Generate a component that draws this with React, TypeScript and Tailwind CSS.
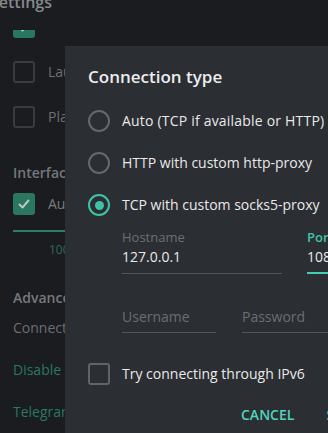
import React from "react";

function CheckMark() {
  return (
    <svg width="14" height="14" viewBox="0 0 14 14" fill="none">
      <polyline points="2.5,7.5 5.5,10.5 11.5,3.5" stroke="#b7c6c1" strokeWidth="2" strokeLinecap="round" strokeLinejoin="round" />
    </svg>
  );
}

function BgCheck({ checked, label, textClass = "" }: { checked?: boolean; label: string; textClass?: string }) {
  return (
    <div className="flex h-[45px] items-center gap-[13px] pl-[13px]">
      {checked ? (
        <div className="flex h-[22px] w-[22px] shrink-0 items-center justify-center rounded-[3px] bg-[#2b765f]">
          <CheckMark />
        </div>
      ) : (
        <div className="h-[22px] w-[22px] shrink-0 rounded-[3px] border-2 border-[#393b3f]" />
      )}
      <span className={"whitespace-nowrap text-[14px] leading-[20px] text-[#6d7074] " + textClass}>{label}</span>
    </div>
  );
}

function Radio({ selected, label, textClass = "" }: { selected?: boolean; label: string; textClass?: string }) {
  return (
    <div className="flex h-[42px] items-center gap-[12px]">
      {selected ? (
        <div className="flex h-[22px] w-[22px] shrink-0 items-center justify-center rounded-full border-2 border-[#3fc3a8]">
          <div className="h-[9px] w-[9px] rounded-full bg-[#3fc3a8]" />
        </div>
      ) : (
        <div className="h-[22px] w-[22px] shrink-0 rounded-full border-2 border-[#65686c]" />
      )}
      <span className={"whitespace-nowrap text-[14px] leading-[20px] text-[#e9e9ea] " + textClass}>{label}</span>
    </div>
  );
}

export default function App() {
  return (
    <div className="relative h-[433px] w-[328px] overflow-hidden bg-[#1a1c1f] font-['Open_Sans',sans-serif]">
      {/* Settings page (behind dialog) */}
      <div className="flex flex-col">
        <div className="relative z-10 h-[30px] overflow-hidden bg-[#1a1c1f]">
          <div className="-ml-[10px] -mt-[9px] whitespace-nowrap text-[16px] font-semibold leading-[22px] text-[#86898e]">
            Settings
          </div>
        </div>
        <div className="h-[403px] overflow-hidden">
          <div className="-mt-[26px] flex flex-col">
            <BgCheck checked label="Show taskbar icon" textClass="mb-[3px]" />
            <BgCheck label="Launch Telegram when system starts" />
            <BgCheck label="Place Telegram in “Send to” menu" />
            <div className="mt-[24px] h-[20px] pl-[13px] text-[14px] font-semibold leading-[20px] text-[#74777b]">
              Interface Scale
            </div>
            <div className="flex h-[42px] items-center gap-[13px] pl-[13px]">
              <div className="flex h-[22px] w-[22px] shrink-0 items-center justify-center rounded-[3px] bg-[#2b765f]">
                <CheckMark />
              </div>
              <span className="whitespace-nowrap text-[14px] leading-[20px] text-[#797c80]">Auto (100%)</span>
            </div>
            <div className="ml-[13px] mt-[5px] h-[2px] w-[200px] bg-[#2a7d66]" />
            <div className="ml-[49px] mt-[10px] h-[16px] text-[12px] leading-[16px] text-[#2a6b5d]">100%</div>
            <div className="mt-[30px] h-[20px] pl-[13px] text-[14px] font-semibold leading-[20px] text-[#76797d]">
              Advanced Settings
            </div>
            <div className="mt-[10px] h-[20px] pl-[13px] text-[14px] leading-[20px] text-[#6c6f73]">
              Connection type: TCP with proxy
            </div>
            <div className="mt-[22px] h-[20px] pl-[13px] text-[14px] leading-[20px] text-[#2a7860]">
              Disable local passcode
            </div>
            <div className="mt-[22px] h-[20px] pl-[13px] text-[14px] leading-[20px] text-[#2a7860]">
              Telegram FAQ
            </div>
          </div>
        </div>
      </div>

      {/* Dialog */}
      <div className="absolute left-[65px] top-[46px] h-[400px] w-[300px] bg-[#2b2e32] pl-[23px] pt-[19px]">
        <div className="whitespace-nowrap text-[17px] font-semibold leading-[23px] text-[#ececed]">Connection type</div>
        <div className="mt-[12px] flex flex-col">
          <Radio label="Auto (TCP if available or HTTP)" textClass="tracking-[0.2px]" />
          <Radio label="HTTP with custom http-proxy" />
          <Radio selected label="TCP with custom socks5-proxy" />
        </div>
        <div className="mt-[3px] flex items-end gap-[25px] pl-[34px]">
          <div className="flex w-[160px] shrink-0 flex-col">
            <div className="h-[16px] text-[13px] leading-[16px] text-[#6c7075]">Hostname</div>
            <div className="mt-[2px] h-[20px] text-[14px] leading-[20px] text-[#e9e9ea]">127.0.0.1</div>
            <div className="mt-[6px] h-[1px] bg-[#515458]" />
          </div>
          <div className="flex w-[80px] shrink-0 flex-col">
            <div className="h-[16px] text-[13px] font-semibold leading-[16px] text-[#3fc6aa]">Port</div>
            <div className="mt-[2px] h-[20px] text-[14px] leading-[20px] text-[#e9e9ea]">1080</div>
            <div className="mt-[5px] h-[2px] bg-[#40cdb1]" />
          </div>
        </div>
        <div className="mt-[33px] flex gap-[26px] pl-[34px]">
          <div className="flex w-[94px] shrink-0 flex-col">
            <div className="h-[20px] text-[14px] leading-[20px] text-[#6a6e73]">Username</div>
            <div className="mt-[5px] h-[1px] bg-[#515458]" />
          </div>
          <div className="flex w-[120px] shrink-0 flex-col">
            <div className="h-[20px] text-[14px] leading-[20px] text-[#6a6e73]">Password</div>
            <div className="mt-[5px] h-[1px] bg-[#515458]" />
          </div>
        </div>
        <div className="mt-[20px] flex h-[42px] items-center gap-[12px]">
          <div className="h-[22px] w-[22px] shrink-0 rounded-[3px] border-2 border-[#606367]" />
          <span className="whitespace-nowrap text-[14px] leading-[20px] text-[#e9e9ea]">Try connecting through IPv6</span>
        </div>
        <div className="ml-[153px] mt-[10px] flex gap-[32px] text-[14px] font-semibold leading-[20px] text-[#52d3ba]">
          <span>CANCEL</span>
          <span>SAVE</span>
        </div>
      </div>
    </div>
  );
}
